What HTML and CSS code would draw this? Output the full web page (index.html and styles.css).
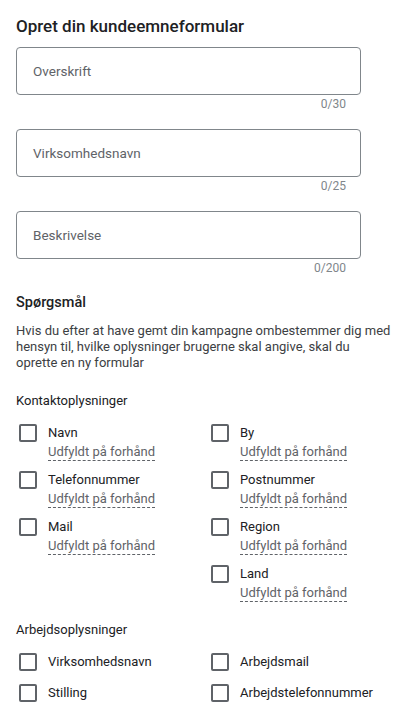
FILE: index.html
```html
<!DOCTYPE html>
<html lang="da">
<head>
<meta charset="utf-8">
<link rel="stylesheet" href="styles.css">
</head>
<body>
<div class="page">
  <h1 class="title">Opret din kundeemneformular</h1>

  <div class="field"><span class="placeholder">Overskrift</span></div>
  <div class="counter">0/30</div>

  <div class="field"><span class="placeholder">Virksomhedsnavn</span></div>
  <div class="counter">0/25</div>

  <div class="field"><span class="placeholder">Beskrivelse</span></div>
  <div class="counter">0/200</div>

  <h2 class="section">Spørgsmål</h2>
  <p class="note">Hvis du efter at have gemt din kampagne ombestemmer dig med hensyn til, hvilke oplysninger brugerne skal angive, skal du<br>oprette en ny formular</p>

  <div class="group-title">Kontaktoplysninger</div>
  <div class="cols">
    <div class="col">
      <div class="item"><span class="box"></span><div class="txt"><div class="label">Navn</div><div class="sub">Udfyldt på forhånd</div></div></div>
      <div class="item"><span class="box"></span><div class="txt"><div class="label">Telefonnummer</div><div class="sub">Udfyldt på forhånd</div></div></div>
      <div class="item"><span class="box"></span><div class="txt"><div class="label">Mail</div><div class="sub">Udfyldt på forhånd</div></div></div>
    </div>
    <div class="col">
      <div class="item"><span class="box"></span><div class="txt"><div class="label">By</div><div class="sub">Udfyldt på forhånd</div></div></div>
      <div class="item"><span class="box"></span><div class="txt"><div class="label">Postnummer</div><div class="sub">Udfyldt på forhånd</div></div></div>
      <div class="item"><span class="box"></span><div class="txt"><div class="label">Region</div><div class="sub">Udfyldt på forhånd</div></div></div>
      <div class="item"><span class="box"></span><div class="txt"><div class="label">Land</div><div class="sub">Udfyldt på forhånd</div></div></div>
    </div>
  </div>

  <div class="group-title work">Arbejdsoplysninger</div>
  <div class="cols">
    <div class="col tight">
      <div class="item"><span class="box"></span><div class="txt"><div class="label">Virksomhedsnavn</div></div></div>
      <div class="item"><span class="box"></span><div class="txt"><div class="label">Stilling</div></div></div>
    </div>
    <div class="col tight">
      <div class="item"><span class="box"></span><div class="txt"><div class="label">Arbejdsmail</div></div></div>
      <div class="item"><span class="box"></span><div class="txt"><div class="label">Arbejdstelefonnummer</div></div></div>
    </div>
  </div>
</div>
</body>
</html>
```
FILE: styles.css
```css
html, body {
  margin: 0;
  padding: 0;
  background: #ffffff;
}
.page {
  padding: 16px 16px 0 16px;
  font-family: Roboto, "Liberation Sans", sans-serif;
  color: #202124;
}
.title {
  margin: 0 0 11px 0;
  font-family: Roboto, "Open Sans", sans-serif;
  font-size: 17px;
  font-weight: 500;
  line-height: 20px;
  color: #202124;
}
.field {
  box-sizing: border-box;
  width: 345px;
  height: 48px;
  border: 1px solid #80868b;
  border-radius: 4px;
  display: flex;
  align-items: center;
  padding-left: 16px;
}
.placeholder {
  font-size: 13.5px;
  color: #5f6368;
}
.counter {
  width: 345px;
  box-sizing: border-box;
  padding-right: 15px;
  text-align: right;
  font-size: 12px;
  line-height: 16px;
  color: #80868b;
  margin: 1px 0 17px 0;
}
.section {
  margin: 14px 0 10px 0;
  font-family: Roboto, "Open Sans", sans-serif;
  font-size: 14.5px;
  font-weight: 500;
  line-height: 20px;
  color: #202124;
}
.note {
  margin: 0;
  font-size: 13px;
  line-height: 16px;
  color: #3c4043;
  width: 392px;
}
.group-title {
  margin-top: 20px;
  font-size: 13px;
  line-height: 20px;
  color: #202124;
}
.group-title.work {
  margin-top: 18px;
}
.cols {
  display: grid;
  grid-template-columns: 192px 1fr;
  padding-left: 3px;
  margin-top: 12px;
}
.col {
  display: flex;
  flex-direction: column;
  gap: 9px;
}
.col.tight {
  gap: 11px;
}
.item {
  display: flex;
  align-items: flex-start;
  gap: 11px;
}
.box {
  box-sizing: border-box;
  width: 18px;
  height: 18px;
  margin-top: 1px;
  border: 2px solid #5f6368;
  border-radius: 2px;
  flex: none;
}
.txt {
  display: flex;
  flex-direction: column;
  align-items: flex-start;
}
.label {
  font-size: 13px;
  line-height: 20px;
  color: #202124;
}
.sub {
  margin-top: 1px;
  font-size: 13px;
  line-height: 16px;
  color: #5f6368;
  border-bottom: 1px dashed #5f6368;
}
```
